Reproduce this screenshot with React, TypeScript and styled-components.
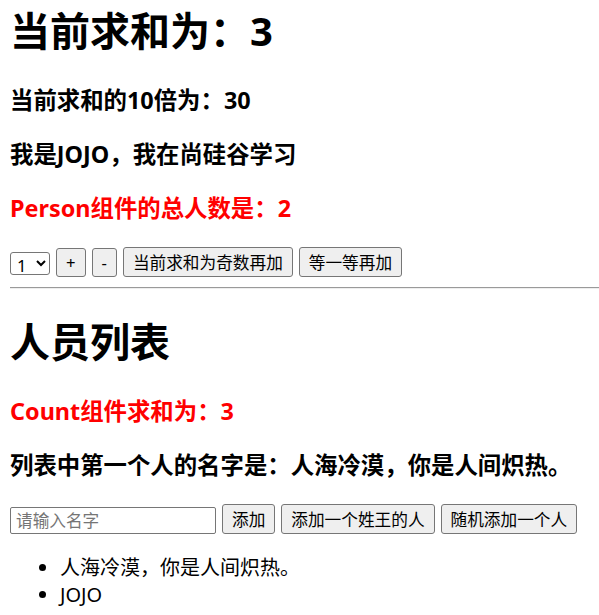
import React from "react";
import styled, { createGlobalStyle } from "styled-components";

const GlobalStyle = createGlobalStyle`
  html, body {
    margin: 0;
    padding: 0;
    background: #ffffff;
  }
  body {
    font-family: "Noto Sans", "Noto Sans CJK SC", sans-serif;
    font-size: 20px;
    color: #000000;
  }
`;

const Page = styled.div`
  padding: 0 0 0 10px;
`;

const Title = styled.h1`
  font-size: 40px;
  font-weight: 700;
  line-height: 1.32;
  margin: 26.8px 0;
  &:first-child {
    margin-top: 5px;
  }
`;

const Sub = styled.h3<{ $accent?: boolean }>`
  font-size: 23.4px;
  font-weight: 700;
  line-height: 1.32;
  margin: 23.4px 0;
  color: ${(p) => (p.$accent ? "#ff0000" : "#000000")};
`;

const Controls = styled.div<{ $gap: number }>`
  display: flex;
  align-items: flex-end;
  gap: ${(p) => p.$gap}px;
`;

const Select = styled.select`
  box-sizing: border-box;
  width: 40px;
  height: 23px;
  margin-bottom: 2px;
  font-family: "Noto Sans", "Noto Sans CJK SC", sans-serif;
  font-size: 16.67px;
  border: 1px solid #767676;
  border-radius: 3px;
  background: #ffffff;
  color: #000000;
  padding: 0 0 0 2px;
`;

const Button = styled.button`
  font-family: "Noto Sans", "Noto Sans CJK SC", sans-serif;
  font-size: 16.67px;
  line-height: normal;
  padding: 2px 9px;
  border: 1px solid #767676;
  border-radius: 3px;
  background: #efefef;
  color: #000000;
`;

const NameInput = styled.input`
  box-sizing: border-box;
  width: 206px;
  height: 27px;
  padding: 1px 5px;
  font-family: "Noto Sans", "Noto Sans CJK SC", sans-serif;
  font-size: 16.67px;
  border: 1px solid #767676;
  border-radius: 2px;
  color: #000000;
  &::placeholder {
    color: #757575;
  }
`;

const Divider = styled.hr`
  height: 0;
  margin: 10px 0 0;
  border: 0;
  border-top: 1px solid #9a9a9a;
  border-bottom: 1px solid #eeeeee;
`;

const People = styled.ul`
  margin: 21px 0 0;
  padding-left: 50px;
  list-style: disc;
`;

const Person = styled.li`
  line-height: 1.32;
`;

export default function App() {
  const persons = ["人海冷漠，你是人间炽热。", "JOJO"];
  return (
    <>
      <GlobalStyle />
      <Page>
        <Title>当前求和为：3</Title>
        <Sub>当前求和的10倍为：30</Sub>
        <Sub>我是JOJO，我在尚硅谷学习</Sub>
        <Sub $accent>Person组件的总人数是：2</Sub>
        <Controls $gap={6}>
          <Select defaultValue="1">
            <option value="1">1</option>
            <option value="2">2</option>
            <option value="3">3</option>
          </Select>
          <Button>+</Button>
          <Button>-</Button>
          <Button>当前求和为奇数再加</Button>
          <Button>等一等再加</Button>
        </Controls>
        <Divider />
        <Title>人员列表</Title>
        <Sub $accent>Count组件求和为：3</Sub>
        <Sub>列表中第一个人的名字是：人海冷漠，你是人间炽热。</Sub>
        <Controls $gap={6}>
          <NameInput type="text" placeholder="请输入名字" />
          <Button>添加</Button>
          <Button>添加一个姓王的人</Button>
          <Button>随机添加一个人</Button>
        </Controls>
        <People>
          {persons.map((name) => (
            <Person key={name}>{name}</Person>
          ))}
        </People>
      </Page>
    </>
  );
}
